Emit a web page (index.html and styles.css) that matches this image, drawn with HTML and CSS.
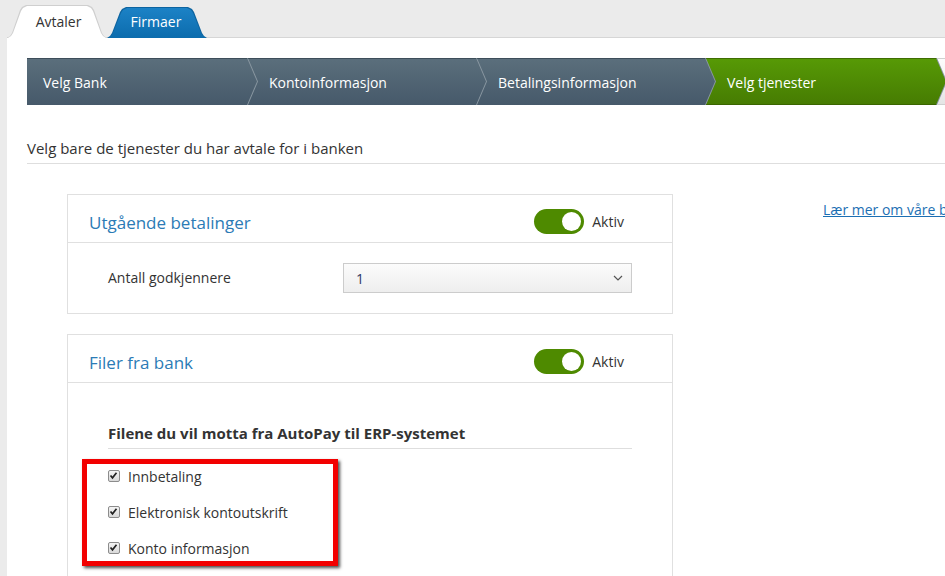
FILE: index.html
```html
<!DOCTYPE html>
<html lang="no">
<head>
    <meta charset="UTF-8">
    <title>Avtaler</title>
    <link rel="stylesheet" href="styles.css">
</head>
<body>
    <div class="tabs">
        <a href="#" class="tab tab-active">Avtaler</a>
        <a href="#" class="tab tab-blue">Firmaer</a>
    </div>
    <div class="panel">
        <div class="wizard">
            <div class="step step-first">Velg Bank</div>
            <div class="step">Kontoinformasjon</div>
            <div class="step">Betalingsinformasjon</div>
            <div class="step step-current">Velg tjenester</div>
            <div class="step step-next"></div>
        </div>

        <p class="intro">Velg bare de tjenester du har avtale for i banken</p>

        <div class="services">
            <div class="cards">
                <div class="card">
                    <div class="card-header">
                        <h3 class="card-title">Utgående betalinger</h3>
                        <span class="toggle"><span class="knob"></span></span>
                        <span class="toggle-label">Aktiv</span>
                    </div>
                    <div class="card-body form-row">
                        <label class="field-label">Antall godkjennere</label>
                        <div class="select">
                            <select>
                                <option>1</option>
                                <option>2</option>
                            </select>
                            <svg class="select-arrow" width="10" height="6" viewBox="0 0 10 6"><polyline points="1,1 5,5 9,1" fill="none" stroke="#555" stroke-width="1.2"/></svg>
                        </div>
                    </div>
                </div>

                <div class="card">
                    <div class="card-header">
                        <h3 class="card-title">Filer fra bank</h3>
                        <span class="toggle"><span class="knob"></span></span>
                        <span class="toggle-label">Aktiv</span>
                    </div>
                    <div class="card-body files">
                        <h4 class="files-title">Filene du vil motta fra AutoPay til ERP-systemet</h4>
                        <div class="check-list">
                            <div class="highlight"></div>
                            <label class="check"><span class="box"><svg width="11" height="11" viewBox="0 0 11 11"><polyline points="2.5,5.5 4.5,7.8 8.5,2.8" fill="none" stroke="#222" stroke-width="1.7"/></svg></span>Innbetaling</label>
                            <label class="check"><span class="box"><svg width="11" height="11" viewBox="0 0 11 11"><polyline points="2.5,5.5 4.5,7.8 8.5,2.8" fill="none" stroke="#222" stroke-width="1.7"/></svg></span>Elektronisk kontoutskrift</label>
                            <label class="check"><span class="box"><svg width="11" height="11" viewBox="0 0 11 11"><polyline points="2.5,5.5 4.5,7.8 8.5,2.8" fill="none" stroke="#222" stroke-width="1.7"/></svg></span>Konto informasjon</label>
                        </div>
                    </div>
                </div>
            </div>
            <a href="#" class="learn-more">Lær mer om våre b</a>
        </div>
    </div>
</body>
</html>
```

FILE: styles.css
```css
html, body {
    margin: 0;
    padding: 0;
    overflow: hidden;
}
body {
    background-color: #ebebeb;
    font-family: "Open Sans", "Liberation Sans", sans-serif;
    font-size: 14px;
    color: #333;
    width: 1240px;
}
.tabs {
    display: flex;
    align-items: flex-end;
    height: 38px;
    padding-left: 7px;
    margin-bottom: -1px;
    position: relative;
    z-index: 2;
}
.tab {
    position: relative;
    width: 100px;
    display: flex;
    justify-content: center;
    align-items: center;
    text-decoration: none;
    font-size: 14px;
    box-sizing: border-box;
}
.tab::before,
.tab::after {
    content: '';
    position: absolute;
    z-index: -1;
    clip-path: polygon(0 100%, 3px calc(100% - 2px), 5px calc(100% - 5px), 13px 5px, 15px 2px, 19px 0, calc(100% - 19px) 0, calc(100% - 15px) 2px, calc(100% - 13px) 5px, calc(100% - 5px) calc(100% - 5px), calc(100% - 3px) calc(100% - 2px), 100% 100%);
}
.tab::before {
    inset: 0;
}
.tab::after {
    inset: 1px 1px 0 1px;
}
.tab-active {
    height: 33px;
    padding: 0 0 1px 3px;
    color: #333;
}
.tab-active::before {background: #cfcfcf;}
.tab-active::after {background: #fff;}
.tab-blue {
    height: 31px;
    padding: 0 2px 3px 0;
    color: #fff;
}
.tab-blue::before {background: #0d64a0;}
.tab-blue::after {background: linear-gradient(#1c82c6, #0c6cad);}
.panel {
    background: #fff;
    border-top: 1px solid #d6d6d6;
    margin-left: 7px;
    padding: 20px 0 0 20px;
    min-height: 600px;
}
.wizard {
    display: flex;
    height: 47px;
    background: #8896a0;
}
.step {
    flex: 0 0 238px;
    margin-left: -9px;
    padding: 2px 0 0 21px;
    box-sizing: border-box;
    display: flex;
    align-items: center;
    color: #fff;
    font-size: 14px;
    white-space: nowrap;
    background: linear-gradient(#5b6f7c, #46596a);
    box-shadow: inset 0 1px 0 #3d4e5a;
    clip-path: polygon(0 0, calc(100% - 10px) 0, 100% 50%, calc(100% - 10px) 100%, 0 100%, 10px 50%);
}
.step-first {
    flex-basis: 230px;
    margin-left: 0;
    padding-left: 16px;
    clip-path: polygon(0 0, calc(100% - 10px) 0, 100% 50%, calc(100% - 10px) 100%, 0 100%);
}
.step-current {
    flex-basis: 240px;
    background: linear-gradient(#579a06, #467b02);
    box-shadow: inset 0 1px 0 #3f6d02, inset 0 -1px 0 #3a6500;
}
.step-next {
    background: linear-gradient(#fdfdfd, #e4e4e4);
    box-shadow: inset 0 1px 0 #d0d0d0, inset 0 -1px 0 #d0d0d0;
}
.intro {
    margin: 33px 0 0;
    padding-bottom: 5px;
    font-size: 15px;
    line-height: 20px;
    border-bottom: 1px solid #dedede;
}
.services {
    display: flex;
    align-items: flex-start;
    padding: 30px 0 0 40px;
}
.cards {
    width: 606px;
    display: flex;
    flex-direction: column;
    gap: 20px;
}
.card {
    border: 1px solid #e0e0e0;
    background: #fff;
}
.card-header {
    height: 48px;
    box-sizing: border-box;
    padding: 6px 0 0 21px;
    border-bottom: 1px solid #e0e0e0;
    display: flex;
    align-items: center;
}
.card-title {
    margin: 0;
    padding-top: 2px;
    flex: 1;
    font-size: 17px;
    font-weight: normal;
    line-height: 24px;
    color: #2b7bb6;
}
.toggle {
    position: relative;
    width: 50px;
    height: 25px;
    margin-left: 1px;
    border-radius: 13px;
    background: #4e8a00;
}
.knob {
    position: absolute;
    top: 3px;
    right: 3px;
    width: 19px;
    height: 19px;
    border-radius: 50%;
    background: #fff;
}
.toggle-label {
    margin: 0 48px 0 8px;
    font-size: 14px;
    line-height: 20px;
}
.card-body {
    padding: 20px 40px;
}
.form-row {
    display: flex;
    align-items: center;
}
.field-label {
    width: 235px;
    line-height: 20px;
}
.select {
    position: relative;
    flex: 1;
}
.select select {
    appearance: none;
    -webkit-appearance: none;
    display: block;
    width: 100%;
    height: 30px;
    padding: 0 12px;
    border: 1px solid #ccc;
    border-radius: 0;
    background: linear-gradient(#fcfcfc, #eeeeee);
    font-family: inherit;
    font-size: 14px;
    color: #2e3a66;
}
.select-arrow {
    position: absolute;
    right: 9px;
    top: 12px;
    pointer-events: none;
}
.files {
    padding: 40px 40px 20px;
}
.files-title {
    margin: 0;
    padding-bottom: 5px;
    border-bottom: 1px solid #dedede;
    font-size: 15px;
    line-height: 20px;
    font-weight: bold;
}
.check-list {
    position: relative;
    margin-top: 9px;
}
.check {
    display: flex;
    align-items: center;
    height: 36px;
    font-size: 14px;
}
.box {
    width: 10px;
    height: 10px;
    margin: 0 8px 0 0;
    border: 1px solid #8c8c8c;
    border-radius: 2px;
    background: linear-gradient(#f4f4f4, #d9d9d9);
    display: flex;
}
.box svg {
    margin: -1px 0 0 -1px;
}
.highlight {
    position: absolute;
    top: 1px;
    left: -26px;
    width: 246px;
    height: 97px;
    border: 5px solid #f20000;
    box-shadow: 2px 2px 3px rgba(0, 0, 0, 0.7);
    pointer-events: none;
}
.learn-more {
    margin: 6px 0 0 150px;
    line-height: 20px;
    color: #1c6fb3;
    text-decoration: underline;
    white-space: nowrap;
}
```
